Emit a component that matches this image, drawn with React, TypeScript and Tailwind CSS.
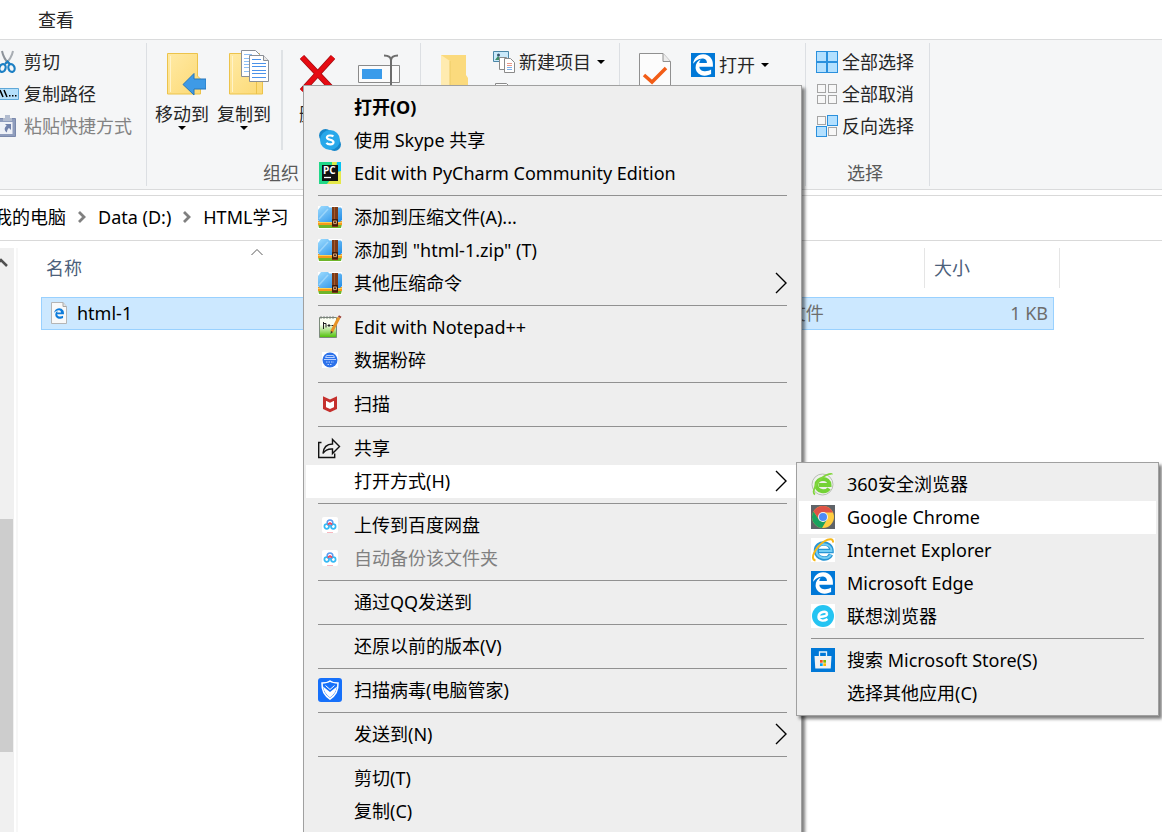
import type { ReactNode } from "react";
import clsx from "clsx";
import { FaEdgeLegacy } from "react-icons/fa6";

/* ---------- small glyphs ---------- */

function DownArrow() {
  return (
    <svg viewBox="0 0 8 4" className="h-1 w-2 shrink-0" aria-hidden="true">
      <path d="M0 0h8L4 4z" fill="#000" />
    </svg>
  );
}

function SubmenuArrow() {
  return (
    <svg viewBox="0 0 12 22" className="h-[22px] w-3 shrink-0" fill="none" stroke="#000" strokeWidth="1.4" aria-hidden="true">
      <path d="M1 1l10 10L1 21" />
    </svg>
  );
}

function CrumbArrow() {
  return (
    <svg viewBox="0 0 8 12" className="h-3 w-2 shrink-0" fill="none" stroke="#808080" strokeWidth="2.8" aria-hidden="true">
      <path d="M1 1l5 5-5 5" />
    </svg>
  );
}

/* ---------- ribbon icons ---------- */

function ScissorsIcon() {
  return (
    <svg viewBox="0 0 20 24" className="h-6 w-5 shrink-0" fill="none" aria-hidden="true">
      <path d="M2 1c1 5 3 9 7 13" stroke="#8d939a" strokeWidth="2" />
      <path d="M13 1c-1 5-3 9-8 13" stroke="#a8adb3" strokeWidth="2" />
      <ellipse cx="2.5" cy="18" rx="3" ry="4" stroke="#1b7fc4" strokeWidth="2.2" transform="rotate(20 2.5 18)" />
      <ellipse cx="11.5" cy="18" rx="3" ry="4" stroke="#1b7fc4" strokeWidth="2.2" transform="rotate(-20 11.5 18)" />
      <path d="M5 14l2.5-2.5L10 14" stroke="#1b7fc4" strokeWidth="2" />
    </svg>
  );
}

function PathIcon() {
  return (
    <svg viewBox="0 0 20 24" className="h-6 w-5 shrink-0" aria-hidden="true">
      <path d="M-2 6.5h20.5v11H-2z" fill="#b5e0fb" stroke="#5fa8d8" />
      <path d="M0 8l3 7M4 8l3 7" stroke="#000" strokeWidth="1.5" />
      <path d="M9 13h1.5v1.5H9zM12 13h1.5v1.5H12zM15 13h1.5v1.5H15z" fill="#000" />
    </svg>
  );
}

function PasteShortcutIcon() {
  return (
    <svg viewBox="0 0 20 24" className="h-6 w-5 shrink-0" aria-hidden="true">
      <path d="M-2 4.5H15.5v18H-2z" fill="#8f9dbd" stroke="#7a89ac" />
      <path d="M0 8h12.5v12H0z" fill="#eef1f7" />
      <path d="M3 4h2V1h5v3h2v3H3z" fill="#b2bccf" />
      <path d="M5 10h6v6l-2-2c-1.5 1-2 2.5-2 4.5-3-2-3-5-.3-6.8z" fill="#7182ab" />
    </svg>
  );
}

function MoveToIcon() {
  return (
    <svg viewBox="0 0 42 46" className="h-[46px] w-[42px]" aria-hidden="true">
      <defs>
        <linearGradient id="folderFill" x1="0" x2="1" y1="0" y2="1">
          <stop offset="0" stopColor="#ffeaa5" />
          <stop offset="1" stopColor="#fcd974" />
        </linearGradient>
      </defs>
      <path d="M3.5 3.5h30V26l3 3v15h-33z" fill="url(#folderFill)" stroke="#ecc34b" />
      <path d="M6.5 6v36" stroke="#fff3c9" />
      <path d="M28.5 32v12" stroke="#ecc34b" />
      <path d="M19 34.5l11-11V29h12v10H30v6z" fill="#3e9ae6" stroke="#2477bd" />
    </svg>
  );
}

function CopyToIcon() {
  return (
    <svg viewBox="0 0 43 46" className="h-[46px] w-[43px]" aria-hidden="true">
      <path d="M3.5 3.5h30V26l3 3v15h-33z" fill="url(#folderFill)" stroke="#ecc34b" />
      <path d="M6.5 6v36" stroke="#fff3c9" />
      <path d="M30.5 30v14" stroke="#ecc34b" />
      <path d="M15.5 .5h14l4 4v22h-18z" fill="#fff" stroke="#8a8f96" />
      <path d="M18 4.5h8M18 8.5h6M18 11.5h5M18 14.5h5M18 17.5h5M18 21.5h5" stroke="#8ec0f5" />
      <path d="M23.5 5.5h14l5 5v21h-19z" fill="#fff" stroke="#8a8f96" />
      <path d="M37.5 5.5v5h5" fill="#e8e8e8" stroke="#8a8f96" />
      <path d="M26 9.5h9M26 13.5h14M26 16.5h14M26 20.5h14M26 23.5h14M26 27.5h14" stroke="#4a92ea" />
    </svg>
  );
}

function DeleteIcon() {
  return (
    <svg viewBox="0 0 42 46" className="h-[46px] w-[42px]" aria-hidden="true">
      <path d="M6 7l32 34M37 7L6 41" stroke="#a30d12" strokeWidth="6" />
      <path d="M6 7l32 34M37 7L6 41" stroke="#e60b12" strokeWidth="4.5" />
    </svg>
  );
}

function RenameIcon() {
  return (
    <svg viewBox="0 0 42 46" className="h-[46px] w-[42px]" aria-hidden="true">
      <path d="M.5 15.5h41v17H.5z" fill="#fbfbfb" stroke="#8a8a8a" />
      <path d="M4 19h20v10H4z" fill="#3a9bea" />
      <path d="M26 5.5c4 0 7 1 7 5V44M40 5.5c-4 0-7 1-7 5" fill="none" stroke="#6d6d6d" strokeWidth="2" />
    </svg>
  );
}

function NewFolderIcon() {
  return (
    <svg viewBox="0 0 28 46" className="h-[46px] w-7" aria-hidden="true">
      <path d="M0 5h25v20l2 3v16H0z" fill="#fbda7d" />
      <path d="M0 5l9 6v33H0z" fill="#ffebb0" />
      <path d="M9 11v33" stroke="#eecb67" />
    </svg>
  );
}

function NewItemIcon() {
  return (
    <svg viewBox="0 0 22 24" className="h-6 w-[22px]" aria-hidden="true">
      <path d="M.5 1.5h15v10H.5z" fill="#c9e9fa" stroke="#4b87a8" />
      <path d="M2 10l3-4 3 3 2-2 4 3z" fill="#3f8f6a" />
      <circle cx="5.5" cy="5" r="1.5" fill="#34546e" />
      <path d="M6.5 7.5h7v12h-7z" fill="#fff" stroke="#8a8a8a" />
      <path d="M11.5 8.5h6l4 4v10h-10z" fill="#fff" stroke="#8a8a8a" />
      <path d="M14 13.5h5M14 15.5h5" stroke="#e79a8b" />
      <path d="M14 17.5h5M14 19.5h5" stroke="#7fb1ea" />
    </svg>
  );
}

function EasyAccessIcon() {
  return (
    <svg viewBox="0 0 22 24" className="h-6 w-[22px]" aria-hidden="true">
      <path d="M2.5 1.5h11l4 4v16h-15z" fill="#fff" stroke="#8a8a8a" />
    </svg>
  );
}

function PropertiesIcon() {
  return (
    <svg viewBox="0 0 32 46" className="h-[46px] w-8" aria-hidden="true">
      <path d="M.5 3.5H24l7.5 8V44H.5z" fill="#fcfcfc" stroke="#909090" />
      <path d="M24 3.5v8h7.5" fill="#ececec" stroke="#909090" />
      <path d="M5 25l8 7 14-14" fill="none" stroke="#f25d17" strokeWidth="3.5" />
    </svg>
  );
}

function EdgeIcon() {
  return (
    <span className="flex size-6 shrink-0 items-center justify-center bg-[#0078d7]">
      <FaEdgeLegacy className="size-[22px] text-white" />
    </span>
  );
}

type SelectCell = "on" | "off";

function SelectIcon({ cells }: { cells: SelectCell[] }) {
  return (
    <svg viewBox="0 0 22 22" className="size-[22px] shrink-0" aria-hidden="true">
      {cells.map((cell, i) => {
        const on = cell === "on";
        const x = (i % 2) * 11 + (on ? 0.5 : 1.5);
        const y = Math.floor(i / 2) * 11 + (on ? 0.5 : 1.5);
        const size = on ? 10 : 8;
        return (
          <rect
            key={i}
            x={x}
            y={y}
            width={size}
            height={size}
            fill={on ? "#b3e0ff" : "#f7f7f7"}
            stroke={on ? "#2a90dd" : "#a5a5a5"}
          />
        );
      })}
    </svg>
  );
}

/* ---------- menu icons ---------- */

function SkypeIcon() {
  return (
    <svg viewBox="0 0 24 24" className="size-6" aria-hidden="true">
      <circle cx="7.5" cy="7.5" r="6.5" fill="#1686c9" />
      <circle cx="16.5" cy="16.5" r="6.5" fill="#1686c9" />
      <circle cx="12" cy="12" r="10" fill="#28a8ea" />
      <path
        d="M15.3 8.5c-1-1.3-6.4-1.7-6.4 1.1 0 2.8 6.6 1.6 6.6 4.6 0 2.8-5.6 2.6-7.1.7"
        fill="none"
        stroke="#fff"
        strokeWidth="2.2"
      />
    </svg>
  );
}

function PyCharmIcon() {
  return (
    <svg viewBox="0 0 24 24" className="size-6" aria-hidden="true">
      <path d="M1 1h22v22H1z" fill="#21d789" />
      <path d="M14 1h6l-1 7-5-3z" fill="#d8ec4a" />
      <path d="M19 1h4v11l-5-3z" fill="#07c3f2" />
      <path d="M23 10v13H9l3-4h7v-8z" fill="#e5e84a" />
      <path d="M4 4h16v16H4z" fill="#111" />
      <text x="5" y="13" fontSize="10" fontWeight="700" fill="#fff" fontFamily="Open Sans, sans-serif">PC</text>
      <path d="M6 16.5h7" stroke="#fff" strokeWidth="1.3" />
    </svg>
  );
}

function ArchiveIcon() {
  return (
    <svg viewBox="0 0 24 24" className="size-6" aria-hidden="true">
      <defs>
        <linearGradient id="archiveFill" x1="0" x2="1" y1="0" y2="1">
          <stop offset="0" stopColor="#9ddcff" />
          <stop offset="1" stopColor="#1f8be6" />
        </linearGradient>
      </defs>
      <path d="M0 1h24v23H0z" fill="#fff" />
      <path d="M0 19h24l-1 4H1z" fill="#6fb52a" />
      <path d="M0 16h24v4H0z" fill="#f79a1b" />
      <path d="M0 17.5h24" stroke="#ffd257" />
      <path d="M0 5l3-4h7l1.5 1.5H23l1 1.5v11l-2 2H2l-2-2z" fill="url(#archiveFill)" />
      <path d="M10 4L1 14" stroke="#c4eaff" strokeWidth="1.5" opacity=".5" />
      <path d="M14 2h6v20h-6z" fill="#7b3a17" />
      <path d="M16.5 2v13" stroke="#a45a2c" />
      <path d="M14.5 14.5h5v6h-5z" fill="#5a2a12" stroke="#3f1c0a" />
      <path d="M15.5 16h3v2.5h-3z" fill="none" stroke="#c79a70" />
    </svg>
  );
}

function NotepadIcon() {
  return (
    <svg viewBox="0 0 24 24" className="size-6" aria-hidden="true">
      <defs>
        <linearGradient id="noteFill" x1="0" x2="0" y1="0" y2="1">
          <stop offset=".35" stopColor="#fafff2" />
          <stop offset="1" stopColor="#4cc004" />
        </linearGradient>
      </defs>
      <path d="M1.5 2.5h17v20h-17z" fill="url(#noteFill)" stroke="#7c8b7c" />
      <path d="M3 1v3M6 1v3M9 1v3M12 1v3M15 1v3" stroke="#777" strokeWidth=".8" />
      <path d="M5.5 7v7M5.5 8.5h2.5v4M9.500 10.500h3M11 9v3M13.500 10.500h2.500" stroke="#222" fill="none" />
      <path d="M21 2.5l-7.5 14.5" stroke="#e79325" strokeWidth="3" />
      <path d="M20.5 1l2.5 1.5" stroke="#9c3f37" strokeWidth="2" />
      <path d="M12.5 19l.5-3 2 1z" fill="#333" />
    </svg>
  );
}

function ShredIcon() {
  return (
    <svg viewBox="0 0 24 24" className="size-6" aria-hidden="true">
      <path d="M4 4h16v16H4z" fill="#fff" />
      <circle cx="12" cy="12" r="7.5" fill="#2d72ea" />
      <path d="M7.5 9.5l1-2h7l1 2zM6 11.5h12" stroke="#b9d1ff" fill="none" />
      <path d="M8 14h8M9.5 16.5h5" stroke="#b9d1ff" strokeDasharray="1.5 1" />
    </svg>
  );
}

function McAfeeIcon() {
  return (
    <svg viewBox="0 0 24 24" className="size-6" aria-hidden="true">
      <path d="M6.5 6.5L12 9l5.5-2.5V16L12 18.5 6.5 16z" fill="#fff" stroke="#c5302d" strokeWidth="3" />
    </svg>
  );
}

function ShareIcon() {
  return (
    <svg viewBox="0 0 24 24" className="size-6" fill="none" stroke="#111" strokeWidth="1.4" aria-hidden="true">
      <path d="M3.5 6.5H.7v15h16v-4" />
      <path d="M5 17.5c.5-6 4-9.500 9.500-9.500V3.500l7 7-7 7V13c-4-.3-7 .5-9.500 4.500z" />
    </svg>
  );
}

function BaiduDiskIcon() {
  return (
    <svg viewBox="0 0 24 24" className="size-6" fill="none" aria-hidden="true">
      <rect x="4" y="4" width="16" height="16" rx="2" fill="#fff" />
      <circle cx="12" cy="9.8" r="2.8" stroke="#5b9cf0" strokeWidth="1.6" />
      <circle cx="8.7" cy="13.5" r="2.3" stroke="#35b9f4" strokeWidth="1.7" />
      <circle cx="15.3" cy="13.5" r="2.3" stroke="#35b9f4" strokeWidth="1.7" />
      <path d="M9.8 11.5L12 10l2.2 1.5" stroke="#f0485c" strokeWidth="1.8" />
      <path d="M9 19.5h6" stroke="#f8b8c0" />
    </svg>
  );
}

function GuardIcon() {
  return (
    <svg viewBox="0 0 24 24" className="size-6" fill="none" aria-hidden="true">
      <rect width="24" height="24" rx="3" fill="#1670fa" />
      <path d="M4 5c3 0 6-.5 8-2 2 1.5 5 2 8 2 .3 7-2.5 12.5-8 16C6.500 17.500 3.700 12 4 5z" stroke="#fff" strokeWidth="1.5" />
      <path d="M5 8.5l7 5.500 7-5.500c-1 5-3 8-7 11-4-3-6-6-7-11z" fill="#fff" />
      <path d="M7.5 7.5l4.5 4 4.500-4" stroke="#fff" />
    </svg>
  );
}

function Browser360Icon() {
  return (
    <svg viewBox="0 0 24 24" className="size-6" fill="none" aria-hidden="true">
      <circle cx="11.5" cy="12.5" r="10.5" fill="#eef1eb" stroke="#b9beb5" />
      <path d="M18 16.500c-3 4.500-12.500 3.500-12.500-3.500 0-8 13-8 13 0H8" stroke="#74d236" strokeWidth="4" />
      <path d="M4 22.500C0 20 6 9 12 5c4-3 9-4 9-2.500" stroke="#82d63d" strokeWidth="1.8" />
    </svg>
  );
}

function ChromeIcon() {
  return (
    <svg viewBox="0 0 24 24" className="size-6" aria-hidden="true">
      <path d="M0 0h24v24H0z" fill="#5f6368" />
      <circle cx="12" cy="12" r="11" fill="#ffcd40" />
      <path d="M2.5 6.5A11 11 0 0 1 21.5 6.5L22 7.5H12L7.5 14z" fill="#de5246" />
      <path d="M2.5 6.5A11 11 0 0 0 11 23l5-8.5-4 2.5-4.500-3z" fill="#1aa15f" />
      <circle cx="12" cy="12" r="5" fill="#f1f1f1" />
      <circle cx="12" cy="12" r="4" fill="#4c8bf5" />
    </svg>
  );
}

function ExplorerIcon() {
  return (
    <svg viewBox="0 0 24 24" className="size-6" fill="none" aria-hidden="true">
      <path d="M0 0h24v24H0z" fill="#fff" />
      <path d="M20 16.500c-3 6.500-15 5-15-4 0-9.500 15.500-9.500 15.500.5H7" stroke="#2795d4" strokeWidth="4.5" />
      <path d="M20 16.500c-3 5.500-14.500 4.500-14.500-4 0-8.500 15-8.500 15 .5H8" stroke="#72cdf4" strokeWidth="2" />
      <path d="M4.500 22.500C-2 21 5 9 13 3.500c5-3 9.500-3.500 9 1" stroke="#f6b81a" strokeWidth="2" />
    </svg>
  );
}

function LenovoIcon() {
  return (
    <svg viewBox="0 0 24 24" className="size-6" fill="none" aria-hidden="true">
      <path d="M0 0h24v24H0z" fill="#fff" />
      <circle cx="12" cy="12" r="11" fill="#25c4f2" />
      <path d="M8 12.500c4 .8 8.500-.5 8-3C15.500 6.500 8 7.500 7.500 12.500c-.3 4 5 5.500 9 2.500" stroke="#fff" strokeWidth="2.4" />
    </svg>
  );
}

function StoreIcon() {
  return (
    <svg viewBox="0 0 24 24" className="size-6" fill="none" aria-hidden="true">
      <path d="M0 0h24v24H0z" fill="#0078d7" />
      <path d="M8.5 8V4h7v4" stroke="#e8f3fc" strokeWidth="1.3" />
      <path d="M3.500 8h17l-.8 12.500H4.300z" fill="#f2f2f2" />
      <path d="M9 12h2.700v2.700H9z" fill="#f25022" />
      <path d="M12.300 12H15v2.700h-2.700z" fill="#7fba00" />
      <path d="M9 15.300h2.700V18H9z" fill="#00a4ef" />
      <path d="M12.300 15.300H15V18h-2.700z" fill="#ffb900" />
    </svg>
  );
}

function HtmlFileIcon() {
  return (
    <svg viewBox="0 0 18 24" className="h-6 w-[18px] shrink-0" aria-hidden="true">
      <path d="M1.5 1.5H13l3.5 4v17h-15z" fill="#f9f9f9" stroke="#b5b5b5" />
      <path d="M13 1.5v4h3.5" fill="#e2e2e2" stroke="#a5a5a5" />
      <svg x="3.5" y="6.5" width="11" height="12" viewBox="0 0 512 512">
        <FaEdgeLegacy size={512} color="#0f7cdb" />
      </svg>
    </svg>
  );
}

/* ---------- context menu ---------- */

type MenuEntry = {
  label: string;
  icon?: ReactNode;
  bold?: boolean;
  disabled?: boolean;
  active?: boolean;
  arrow?: boolean;
  children?: MenuEntry[][];
};

const openWith: MenuEntry[][] = [
  [
    { label: "360安全浏览器", icon: <Browser360Icon /> },
    { label: "Google Chrome", icon: <ChromeIcon />, active: true },
    { label: "Internet Explorer", icon: <ExplorerIcon /> },
    { label: "Microsoft Edge", icon: <EdgeIcon /> },
    { label: "联想浏览器", icon: <LenovoIcon /> },
  ],
  [
    { label: "搜索 Microsoft Store(S)", icon: <StoreIcon /> },
    { label: "选择其他应用(C)" },
  ],
];

const fileMenu: MenuEntry[][] = [
  [
    { label: "打开(O)", bold: true },
    { label: "使用 Skype 共享", icon: <SkypeIcon /> },
    { label: "Edit with PyCharm Community Edition", icon: <PyCharmIcon /> },
  ],
  [
    { label: "添加到压缩文件(A)...", icon: <ArchiveIcon /> },
    { label: '添加到 "html-1.zip" (T)', icon: <ArchiveIcon /> },
    { label: "其他压缩命令", icon: <ArchiveIcon />, arrow: true },
  ],
  [
    { label: "Edit with Notepad++", icon: <NotepadIcon /> },
    { label: "数据粉碎", icon: <ShredIcon /> },
  ],
  [{ label: "扫描", icon: <McAfeeIcon /> }],
  [
    { label: "共享", icon: <ShareIcon /> },
    { label: "打开方式(H)", active: true, arrow: true, children: openWith },
  ],
  [
    { label: "上传到百度网盘", icon: <BaiduDiskIcon /> },
    { label: "自动备份该文件夹", icon: <BaiduDiskIcon />, disabled: true },
  ],
  [{ label: "通过QQ发送到" }],
  [{ label: "还原以前的版本(V)" }],
  [{ label: "扫描病毒(电脑管家)", icon: <GuardIcon /> }],
  [{ label: "发送到(N)", arrow: true }],
  [{ label: "剪切(T)" }, { label: "复制(C)" }],
];

function Menu({ groups, className }: { groups: MenuEntry[][]; className: string }) {
  return (
    <div
      role="menu"
      className={clsx(
        "absolute border border-[#a0a0a0] bg-[#eeeeee] px-0.5 py-[5px] text-black shadow-[3px_3px_3px_rgba(0,0,0,0.5)]",
        className,
      )}
    >
      {groups.map((group, g) => (
        <div key={g}>
          {g > 0 && <hr className="mx-3 my-[5px] border-t border-[#919191]" />}
          {group.map((entry) => (
            <div key={entry.label} className="relative">
              <button
                type="button"
                role="menuitem"
                disabled={entry.disabled}
                className={clsx(
                  "flex h-[33px] w-full items-center gap-3 px-3 pb-0.5 text-left whitespace-nowrap",
                  entry.bold && "font-bold",
                  entry.disabled && "text-[#808080]",
                  entry.active && "bg-white",
                )}
              >
                <span className="flex size-6 shrink-0">{entry.icon}</span>
                <span className="flex-1">{entry.label}</span>
                {entry.arrow && <SubmenuArrow />}
              </button>
              {entry.children && (
                <Menu groups={entry.children} className="-top-[3px] left-full -ml-[3px] w-[363px]" />
              )}
            </div>
          ))}
        </div>
      ))}
    </div>
  );
}

/* ---------- ribbon ---------- */

function RibbonGroup({ title, className, children }: { title?: string; className: string; children: ReactNode }) {
  return (
    <section className={clsx("my-[3px] flex shrink-0 flex-col border-r border-[#dcdfe3]", className)}>
      <div className="flex flex-1 items-start">{children}</div>
      <h2 className="h-[25px] pr-[5px] text-center leading-6 text-[#5a5a5a]">{title}</h2>
    </section>
  );
}

type ButtonProps = {
  label?: string;
  name?: string;
  icon: ReactNode;
  arrow?: boolean;
  disabled?: boolean;
};

function BigButton({ label, name, icon, arrow }: ButtonProps) {
  return (
    <button type="button" aria-label={name} className="flex w-[62px] flex-col items-center pt-[7px] whitespace-nowrap">
      {icon}
      {label && <span className="mt-[6px] leading-6">{label}</span>}
      {arrow && <DownArrow />}
    </button>
  );
}

function SmallButton({ label, name, icon, disabled, arrow }: ButtonProps) {
  return (
    <button
      type="button"
      aria-label={name}
      disabled={disabled}
      className={clsx("flex h-8 items-center gap-1 whitespace-nowrap", disabled && "text-[#838383]")}
    >
      {icon}
      {label}
      {arrow && (
        <span className="ml-0.5">
          <DownArrow />
        </span>
      )}
    </button>
  );
}

function Ribbon() {
  return (
    <div className="flex h-[150px] border-b border-[#dadbdc] bg-[#f5f6f7] text-[#262626]">
      <RibbonGroup className="w-[147px]">
        <div className="flex flex-col pt-[3px]">
          <SmallButton label="剪切" icon={<ScissorsIcon />} />
          <SmallButton label="复制路径" icon={<PathIcon />} />
          <SmallButton label="粘贴快捷方式" icon={<PasteShortcutIcon />} disabled />
        </div>
      </RibbonGroup>
      <RibbonGroup title="组织" className="w-[274px]">
        <div className="flex pl-1">
          <BigButton label="移动到" icon={<span className="pl-[6px]"><MoveToIcon /></span>} arrow />
          <BigButton label="复制到" icon={<span className="pl-[6px]"><CopyToIcon /></span>} arrow />
        </div>
        <div className="mt-[7px] ml-[6px] h-[100px] w-0.5 bg-[#dfe2e5]" />
        <div className="flex pl-[3px]">
          <BigButton label="删除" icon={<DeleteIcon />} />
          <BigButton name="重命名" icon={<RenameIcon />} />
        </div>
      </RibbonGroup>
      <RibbonGroup className="w-[199px]">
        <div className="flex pl-[3px]">
          <BigButton name="新建文件夹" icon={<NewFolderIcon />} />
        </div>
        <div className="flex flex-col pt-[3px] pl-[7px]">
          <SmallButton label="新建项目" icon={<NewItemIcon />} arrow />
          <SmallButton name="轻松访问" icon={<EasyAccessIcon />} />
        </div>
      </RibbonGroup>
      <RibbonGroup className="w-[186px]">
        <div className="flex pl-1">
          <BigButton name="属性" icon={<PropertiesIcon />} />
        </div>
        <div className="flex flex-col pt-[6px] pl-[5px]">
          <SmallButton label="打开" icon={<EdgeIcon />} arrow />
        </div>
      </RibbonGroup>
      <RibbonGroup title="选择" className="w-[124px]">
        <div className="flex flex-col pt-[3px] pl-[10px]">
          <SmallButton label="全部选择" icon={<SelectIcon cells={["on", "on", "on", "on"]} />} />
          <SmallButton label="全部取消" icon={<SelectIcon cells={["off", "off", "off", "off"]} />} />
          <SmallButton label="反向选择" icon={<SelectIcon cells={["off", "on", "on", "off"]} />} />
        </div>
      </RibbonGroup>
    </div>
  );
}

/* ---------- file list ---------- */

function ScrollBar() {
  return (
    <div className="flex w-[14px] shrink-0 flex-col bg-[#f0f0f0]">
      <svg viewBox="0 0 14 271" className="h-[271px] w-[14px]" fill="none" stroke="#505050" strokeWidth="2.5" aria-hidden="true">
        <path d="M-5 18l6-6 6 6" />
      </svg>
      <div className="h-[233px] w-[13px] bg-[#cdcdcd]" />
    </div>
  );
}

function HeaderCell({ name, sorted }: { name?: string; sorted?: boolean }) {
  return (
    <div className="relative flex h-10 items-center border-r border-[#e5e5e5] pl-[5px]">
      {name}
      {sorted && (
        <svg
          viewBox="0 0 12 8"
          className="absolute top-0 left-1/2 h-2 w-3 -translate-x-1/2"
          fill="none"
          stroke="#5a5a5a"
          aria-hidden="true"
        >
          <path d="M.5 7L6 1.5 11.5 7" />
        </svg>
      )}
    </div>
  );
}

const cell = "border-y border-[#99d1ff] bg-[#cce8ff] p-0 pb-0.5";

function FileTable() {
  return (
    <table className="table-fixed border-separate border-spacing-0 text-left">
      <colgroup>
        <col className="w-[432px]" />
        <col className="w-[246px]" />
        <col className="w-[206px]" />
        <col className="w-[129px]" />
        <col className="w-[6px]" />
      </colgroup>
      <thead className="text-[#4c607a]">
        <tr>
          <th className="p-0 pb-[9px] font-normal">
            <HeaderCell name="名称" sorted />
          </th>
          <th aria-label="修改日期" className="p-0 pb-[9px]">
            <HeaderCell />
          </th>
          <th aria-label="类型" className="p-0 pb-[9px]">
            <HeaderCell />
          </th>
          <th colSpan={2} className="p-0 pb-[9px] pl-1 font-normal">
            <HeaderCell name="大小" />
          </th>
        </tr>
      </thead>
      <tbody>
        <tr className="text-[#6d6d6d]">
          <td className={clsx(cell, "h-[33px] border-l pl-2 text-black")}>
            <div className="flex items-center gap-[9px]">
              <HtmlFileIcon />
              html-1
            </div>
          </td>
          <td className={cell} />
          <td className={clsx(cell, "pl-[15px]")}>HTML 文件</td>
          <td className={clsx(cell, "border-r pr-[5px] text-right")}>1 KB</td>
          <td className="p-0" />
        </tr>
      </tbody>
    </table>
  );
}

export default function App() {
  return (
    <div className="relative flex min-h-screen flex-col overflow-hidden bg-white font-['Noto_Sans','Noto_Sans_CJK_SC',sans-serif] text-[18px] leading-6">
      <nav className="flex h-10 items-center border-b border-[#dadbdc] pl-[38px] text-[#262626]">
        <button type="button">查看</button>
      </nav>
      <Ribbon />

      <nav className="mt-[5px] flex h-[46px] items-center gap-3 border-y border-[#d9d9d9] pb-0.5 whitespace-nowrap">
        <a href="#pc" className="-ml-[6px]">我的电脑</a>
        <CrumbArrow />
        <a href="#data">Data (D:)</a>
        <CrumbArrow />
        <a href="#html">HTML学习</a>
      </nav>

      <main className="mt-[7px] flex flex-1">
        <ScrollBar />
        <div className="ml-0.5 w-0.5 shrink-0 bg-[#f7f7f7]" />
        <div className="ml-[23px]">
          <FileTable />
        </div>
      </main>

      <Menu groups={fileMenu} className="top-[85px] left-[303px] w-[499px]" />
    </div>
  );
}
